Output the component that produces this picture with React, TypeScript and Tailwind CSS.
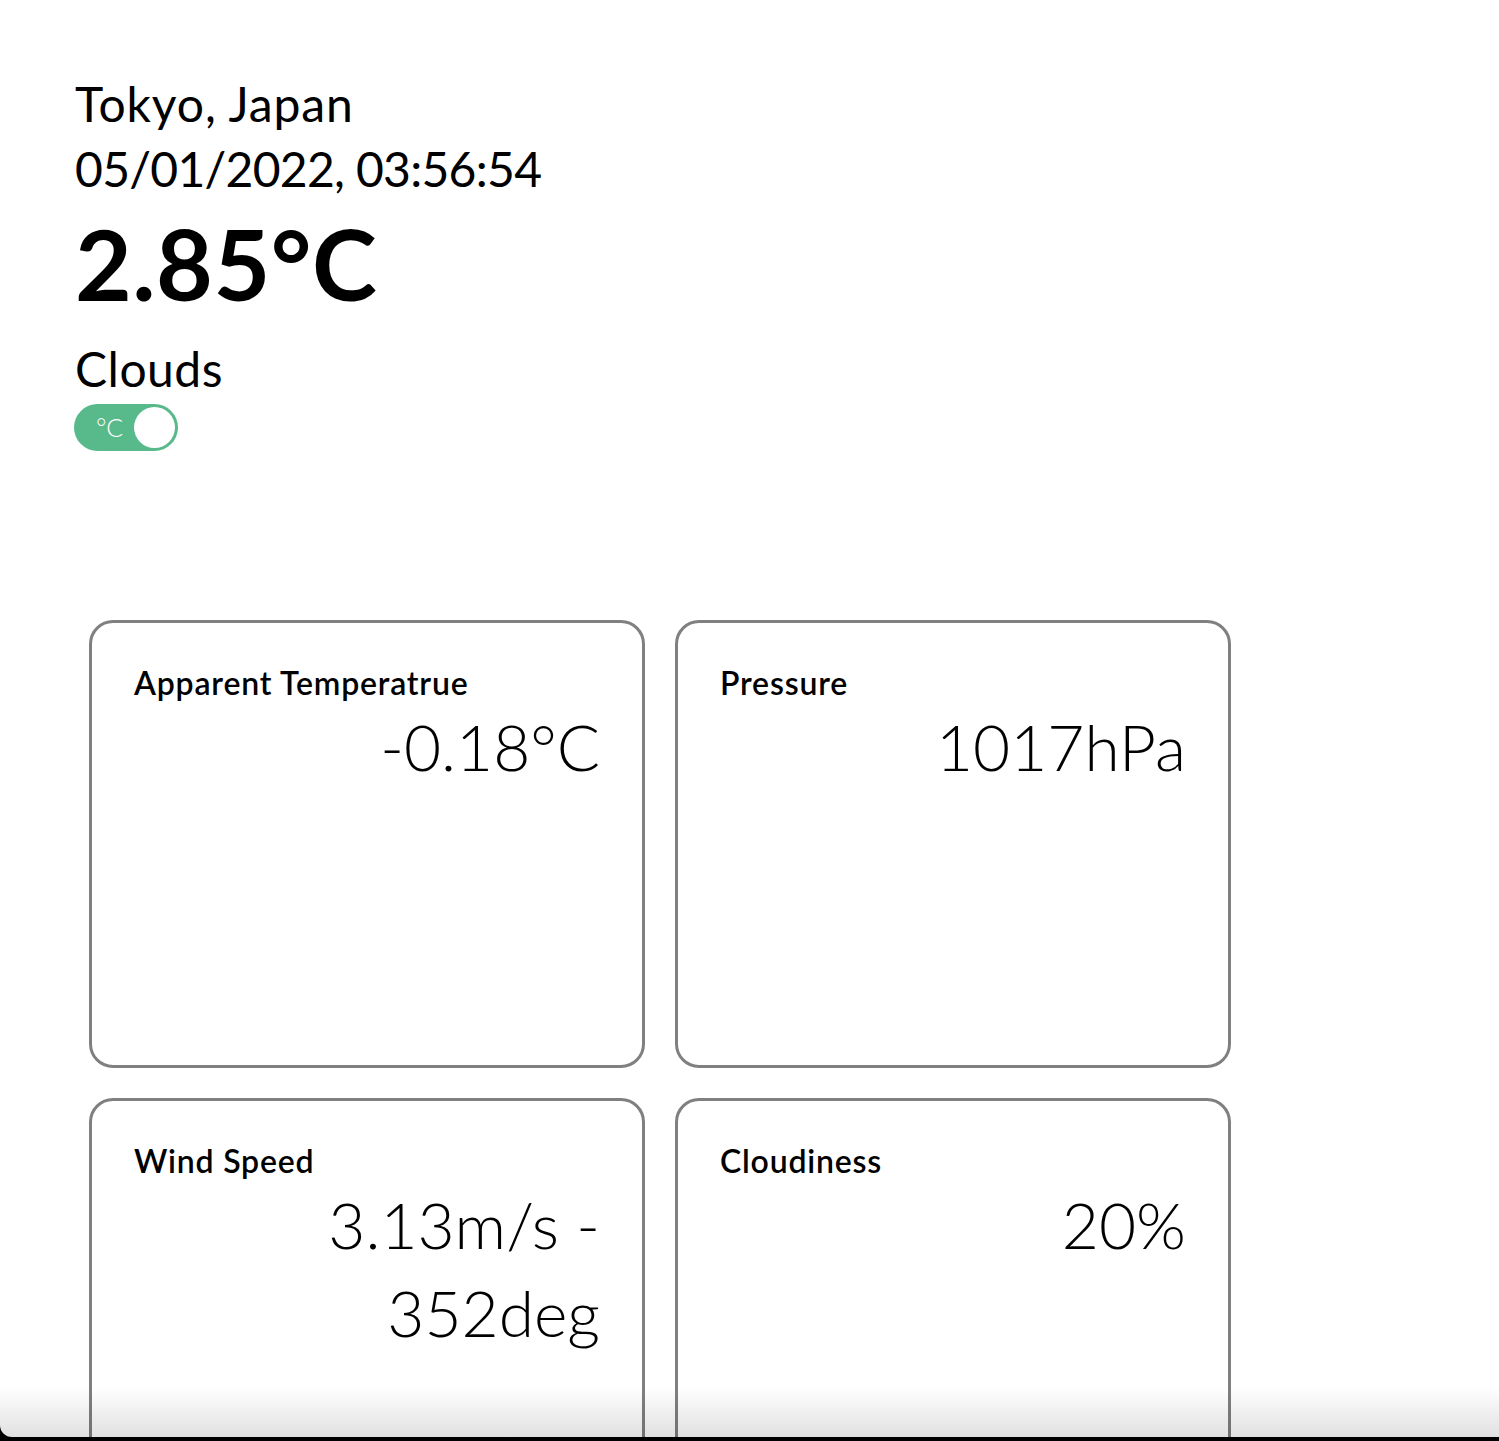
import React from 'react';

const font = { fontFamily: 'Lato, "Noto Sans", sans-serif' };

type Stat = { label: string; value: string };

const stats: Stat[] = [
  { label: 'Apparent Temperatrue', value: '-0.18°C' },
  { label: 'Pressure', value: '1017hPa' },
  { label: 'Wind Speed', value: '3.13m/s - 352deg' },
  { label: 'Cloudiness', value: '20%' },
];

const StatCard = ({ label, value }: Stat) => (
  <div className="h-[448px] rounded-[24px] border-[3px] border-[#808080] px-[42px] pt-[40px]">
    <h3 className="text-[32px] leading-[40px] font-semibold tracking-[0.8px] text-black">{label}</h3>
    <p className="text-[64px] leading-[88px] font-light text-black text-right">{value}</p>
  </div>
);

export default function App() {
  const [celsius, setCelsius] = React.useState(true);

  return (
    <div className="min-h-[1441px] bg-black" style={font}>
      {/* window */}
      <div className="relative h-[1437px] overflow-hidden rounded-bl-[12px] bg-white">
        <div className="pl-[75px] pt-[71px]">
          <p className="text-[48px] leading-[65px] tracking-[0.9px] text-black">Tokyo, Japan</p>
          <p className="text-[48px] leading-[65px] tracking-[-0.7px] text-black">05/01/2022, 03:56:54</p>
          <h1 className="mt-[4px] text-[98px] leading-[1.2] font-bold tracking-[0.5px] text-black">2.85°C</h1>
          <p className="mt-[13px] text-[48px] leading-[65px] tracking-[0.5px] text-black">Clouds</p>
          <button
            onClick={() => setCelsius(!celsius)}
            className="-ml-[1px] mt-[3px] flex h-[47px] w-[104px] items-center justify-between rounded-full bg-[#58b98a] pl-[22px] pr-[3px]"
          >
            <span className="text-[25px] font-light leading-none text-white">°C</span>
            <span className="h-[41px] w-[41px] rounded-full bg-white" />
          </button>
        </div>

        <div className="ml-[89px] mt-[169px] grid w-[1142px] grid-cols-2 gap-[30px]">
          {stats.map((s) => (
            <StatCard key={s.label} {...s} />
          ))}
        </div>

        {/* bottom shade of the window */}
        <div className="pointer-events-none absolute inset-x-0 bottom-0 h-[50px] bg-gradient-to-b from-transparent to-black/[0.12]" />
      </div>
    </div>
  );
}
